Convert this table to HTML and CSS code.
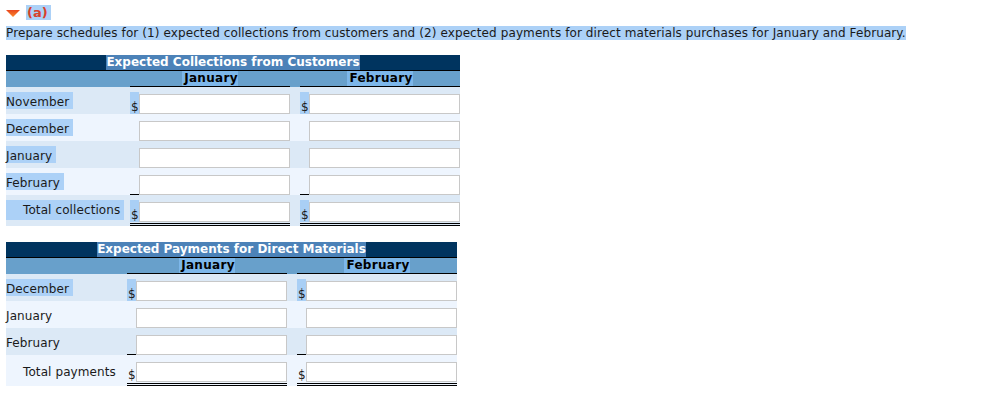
FILE: index.html
```html
<!DOCTYPE html>
<html lang="en">
<head>
<meta charset="utf-8">
<title>Schedules</title>
<link rel="stylesheet" href="styles.css">
</head>
<body>
<div class="page">
  <div class="part-head">
    <svg class="caret" width="14" height="7" viewBox="0 0 14 7" aria-hidden="true">
      <defs>
        <linearGradient id="cg" x1="0" y1="0" x2="0" y2="1">
          <stop offset="0" stop-color="#e8461e"/>
          <stop offset="1" stop-color="#fb8a2c"/>
        </linearGradient>
      </defs>
      <polygon points="0,0 14,0 7,7" fill="url(#cg)"/>
    </svg>
    <span class="sel part-label">(a)</span>
  </div>
  <p class="prompt"><span class="sel">Prepare schedules for (1) expected collections from customers and (2) expected payments for direct materials purchases for January and February. </span></p>

  <section class="sched sched--coll">
    <div class="sched-title"><span class="sel-dark">Expected Collections from Customers </span></div>
    <div class="sched-head">
      <div></div>
      <div class="col-head"><span class="sel-mid">January </span></div>
      <div></div>
      <div class="col-head"><span class="sel-mid">February </span></div>
    </div>
    <div class="row row--dark">
      <div class="label"><span class="lbl sel">November </span></div>
      <div class="amt-cell"><span class="cur cur--sel">$</span><input class="amt" type="text"></div>
      <div></div>
      <div class="amt-cell"><span class="cur cur--sel">$</span><input class="amt" type="text"></div>
    </div>
    <div class="row row--light">
      <div class="label"><span class="lbl sel">December </span></div>
      <div class="amt-cell"><span class="cur"></span><input class="amt" type="text"></div>
      <div></div>
      <div class="amt-cell"><span class="cur"></span><input class="amt" type="text"></div>
    </div>
    <div class="row row--dark">
      <div class="label"><span class="lbl sel">January </span></div>
      <div class="amt-cell"><span class="cur"></span><input class="amt" type="text"></div>
      <div></div>
      <div class="amt-cell"><span class="cur"></span><input class="amt" type="text"></div>
    </div>
    <div class="row row--light">
      <div class="label"><span class="lbl sel">February </span></div>
      <div class="amt-cell"><span class="cur cur--rule"></span><input class="amt" type="text"></div>
      <div></div>
      <div class="amt-cell"><span class="cur cur--rule"></span><input class="amt" type="text"></div>
    </div>
    <div class="row row--dark row--total">
      <div class="label label--total"><span class="sel sel--total">Total collections </span></div>
      <div class="amt-cell amt-cell--total"><span class="cur cur--sel">$</span><input class="amt" type="text"></div>
      <div></div>
      <div class="amt-cell amt-cell--total"><span class="cur cur--sel">$</span><input class="amt" type="text"></div>
    </div>
  </section>

  <section class="sched sched--pay">
    <div class="sched-title"><span class="sel-dark">Expected Payments for Direct Materials </span></div>
    <div class="sched-head">
      <div></div>
      <div class="col-head"><span class="sel-mid">January </span></div>
      <div></div>
      <div class="col-head"><span class="sel-mid">February </span></div>
    </div>
    <div class="row row--dark">
      <div class="label"><span class="lbl sel">December </span></div>
      <div class="amt-cell"><span class="cur cur--sel">$</span><input class="amt" type="text"></div>
      <div></div>
      <div class="amt-cell"><span class="cur cur--sel">$</span><input class="amt" type="text"></div>
    </div>
    <div class="row row--light">
      <div class="label"><span class="lbl">January</span></div>
      <div class="amt-cell"><span class="cur"></span><input class="amt" type="text"></div>
      <div></div>
      <div class="amt-cell"><span class="cur"></span><input class="amt" type="text"></div>
    </div>
    <div class="row row--dark">
      <div class="label"><span class="lbl">February</span></div>
      <div class="amt-cell"><span class="cur cur--rule"></span><input class="amt" type="text"></div>
      <div></div>
      <div class="amt-cell"><span class="cur cur--rule"></span><input class="amt" type="text"></div>
    </div>
    <div class="row row--light row--total">
      <div class="label label--total"><span class="plain--total">Total payments</span></div>
      <div class="amt-cell amt-cell--total"><span class="cur">$</span><input class="amt" type="text"></div>
      <div></div>
      <div class="amt-cell amt-cell--total"><span class="cur">$</span><input class="amt" type="text"></div>
    </div>
  </section>
</div>
</body>
</html>
```

FILE: styles.css
```css
html, body {
  margin: 0;
  padding: 0;
  background: #ffffff;
}

.page {
  padding: 5px 6px 0;
  font-family: Verdana, "DejaVu Sans", sans-serif;
  font-size: 12px;
  letter-spacing: 0.1px;
  color: #1a1a1a;
}

.part-head {
  display: flex;
  align-items: center;
  height: 15px;
  gap: 6px;
}

.caret {
  display: block;
  margin-top: 2px;
}

.sel {
  background: #acd1f7;
}

.part-label {
  color: #d8402a;
  font-weight: bold;
  font-size: 13px;
  letter-spacing: 0;
  line-height: 15px;
  padding: 0 3px 0 1px;
}

.prompt {
  margin: 6px 0 0;
  line-height: 15px;
}

/* schedules */
.sched {
  --cols: 124px 160px 10px 160px;
  width: 454px;
  margin-top: 14px;
}

.sched--pay {
  --cols: 121px 160px 10px 160px;
  width: 451px;
  margin-top: 16px;
}

.sched-title {
  height: 15px;
  background: #00345f;
  border-bottom: 1px solid #000;
  text-align: center;
  color: #ffffff;
  font-weight: bold;
  font-size: 12px;
  letter-spacing: 0;
  line-height: 15px;
}

.sel-dark {
  display: inline-block;
  background: #4c82b8;
  height: 15px;
}

.sched-head {
  display: grid;
  grid-template-columns: var(--cols);
  height: 16px;
  background: #68a0cb;
  font-weight: bold;
  font-size: 12px;
  letter-spacing: 0.3px;
  line-height: 15px;
  color: #000;
}

.col-head {
  text-align: center;
  border-bottom: 1px solid #000;
  height: 15px;
}

.sel-mid {
  display: inline-block;
  background: #7db7ea;
  height: 15px;
  padding-left: 2px;
}

.row {
  display: grid;
  grid-template-columns: var(--cols);
  height: 27px;
}

.row--dark {
  background: #dce9f6;
}

.row--light {
  background: #eef5fe;
}

.row--total {
  height: 31px;
}

.label {
  padding-top: 5px;
  white-space: pre;
}

.lbl {
  display: inline-block;
  padding-top: 3px;
  line-height: 14px;
}

.label--total {
  padding-top: 5px;
}

.sel--total {
  display: block;
  padding-left: 17px;
  line-height: 20px;
  margin-right: 6px;
}

.plain--total {
  display: block;
  padding-left: 17px;
  padding-top: 2px;
  line-height: 20px;
}

.amt-cell {
  display: flex;
  align-items: flex-end;
}

.amt-cell--total {
  padding-bottom: 1px;
  border-bottom: 3px double #000;
}

.cur {
  box-sizing: border-box;
  width: 9px;
  height: 22px;
  flex: none;
  font-size: 12px;
  line-height: 12px;
  display: flex;
  align-items: flex-end;
  padding-left: 1px;
  padding-bottom: 1px;
}

.cur--sel {
  background: #a9cff5;
}

.cur--rule {
  border-bottom: 1px solid #000;
}

.amt {
  box-sizing: border-box;
  width: 151px;
  height: 20px;
  margin: 0;
  padding: 0 3px;
  border: 1px solid #c8c8c8;
  background: #ffffff;
  font: inherit;
  flex: none;
}
```
